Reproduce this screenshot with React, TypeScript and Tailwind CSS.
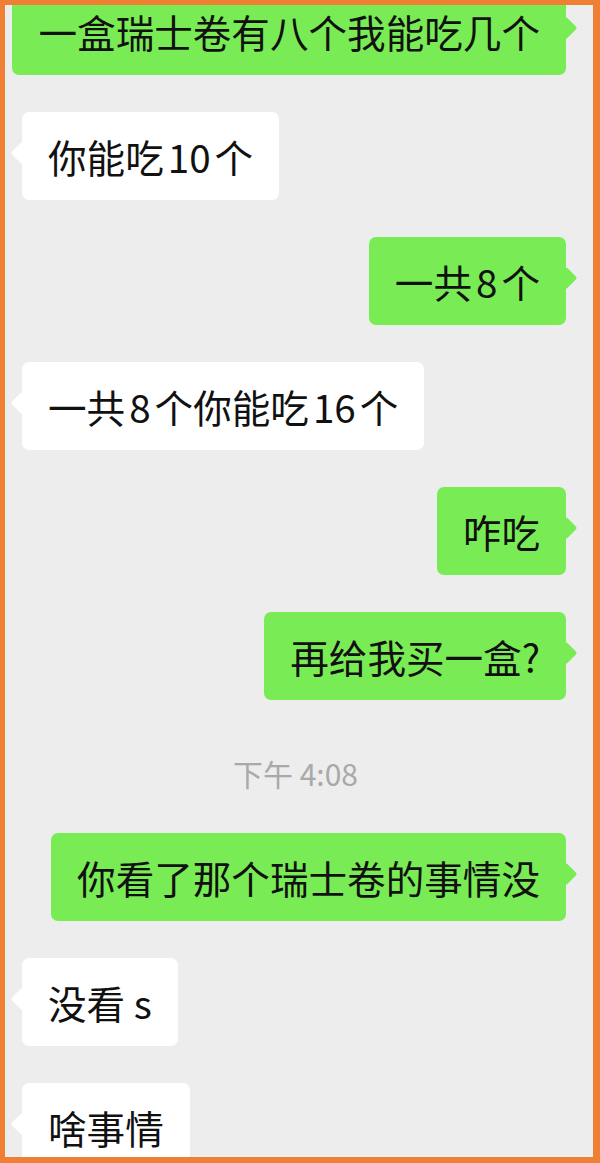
import type { ReactNode } from 'react'

const font = { fontFamily: '"Noto Sans CJK SC", "Noto Sans", sans-serif' }

function Num({ children }: { children: ReactNode }) {
  return <span className="mx-[4px]">{children}</span>
}

function Bubble({ side, children }: { side: 'left' | 'right'; children: ReactNode }) {
  const mine = side === 'right'
  return (
    <div className={mine ? 'flex justify-end pr-[27px] pl-[2px]' : 'flex justify-start pl-[17px] pr-[40px]'}>
      <div
        className={
          'relative rounded-[7px] px-[26px] py-[22px] text-[38.6px] leading-[44px] text-[#111] ' +
          (mine ? 'bg-[#79ec55]' : 'bg-white')
        }
      >
        <span
          className={
            'absolute top-[33px] h-[16px] w-[16px] rotate-45 rounded-[2px] ' +
            (mine ? '-right-[8px] bg-[#79ec55]' : '-left-[8px] bg-white')
          }
        />
        <span className="relative whitespace-nowrap">{children}</span>
      </div>
    </div>
  )
}

export default function App() {
  return (
    <div className="h-[1163px] w-[600px] bg-[#ee7f33] pt-[5px] pr-[7px] pb-[6px] pl-[5px]" style={font}>
      <div className="h-full w-full overflow-hidden bg-[#ededed]">
        <div className="-mt-[18px] flex flex-col gap-[37px]">
          <Bubble side="right">一盒瑞士卷有八个我能吃几个</Bubble>
          <Bubble side="left">你能吃<Num>10</Num>个</Bubble>
          <Bubble side="right">一共<Num>8</Num>个</Bubble>
          <Bubble side="left">一共<Num>8</Num>个你能吃<Num>16</Num>个</Bubble>
          <Bubble side="right">咋吃</Bubble>
          <Bubble side="right">再给我买一盒?</Bubble>
        </div>
        <div className="mt-[53px] mb-[40px] flex h-[40px] items-center justify-center pr-[7px] text-[30px] text-[#a9a9a9]">
          下午 4:08
        </div>
        <div className="flex flex-col gap-[37px]">
          <Bubble side="right">你看了那个瑞士卷的事情没</Bubble>
          <Bubble side="left">没看 s</Bubble>
          <Bubble side="left">啥事情</Bubble>
        </div>
      </div>
    </div>
  )
}
